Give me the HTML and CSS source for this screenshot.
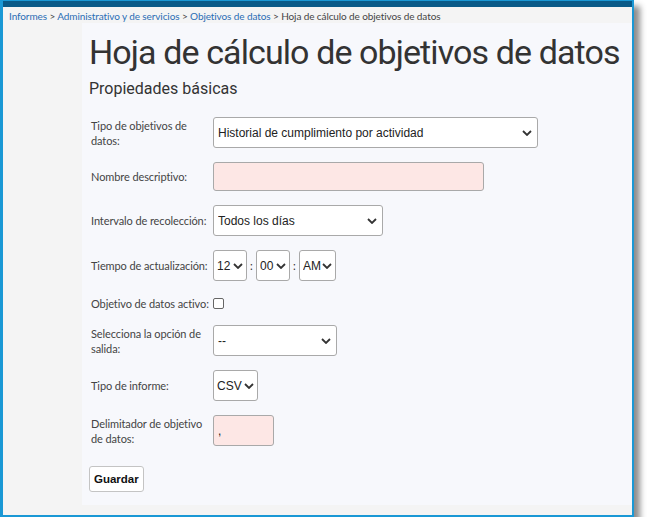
FILE: index.html
```html
<!DOCTYPE html>
<html lang="es">

<head>
    <meta charset="UTF-8" />
    <meta name="viewport" content="width=device-width, initial-scale=1.0" />
    <title>Hoja de cálculo de objetivos de datos</title>
    <link rel="stylesheet" href="styles.css">
</head>

<body>
    <div class="window">
        <div class="topbar"></div>
        <nav class="crumbs">
            <a href="#">Informes</a> &gt;
            <a href="#">Administrativo y de servicios</a> &gt;
            <a href="#">Objetivos de datos</a> &gt;
            <span>Hoja de cálculo de objetivos de datos</span>
        </nav>
        <div class="page">
            <h1>Hoja de cálculo de objetivos de datos</h1>
            <h2>Propiedades básicas</h2>
            <form class="props">
                <div class="row">
                    <label for="tipo">Tipo de objetivos de datos:</label>
                    <select id="tipo" class="w-tipo">
                        <option>Historial de cumplimiento por actividad</option>
                    </select>
                </div>
                <div class="row">
                    <label for="nombre">Nombre descriptivo:</label>
                    <input type="text" id="nombre" class="required w-nombre" />
                </div>
                <div class="row">
                    <label for="intervalo">Intervalo de recolección:</label>
                    <select id="intervalo" class="w-intervalo">
                        <option>Todos los días</option>
                    </select>
                </div>
                <div class="row">
                    <label for="hora">Tiempo de actualización:</label>
                    <div class="time">
                        <select id="hora" class="small w-hora"><option>12</option></select>
                        <span>:</span>
                        <select class="small w-min"><option>00</option></select>
                        <span>:</span>
                        <select class="small w-ampm"><option>AM</option></select>
                    </div>
                </div>
                <div class="row row-check">
                    <label for="activo">Objetivo de datos activo:</label>
                    <input type="checkbox" id="activo" />
                </div>
                <div class="row">
                    <label for="salida">Selecciona la opción de salida:</label>
                    <select id="salida" class="w-salida">
                        <option>--</option>
                    </select>
                </div>
                <div class="row">
                    <label for="informe">Tipo de informe:</label>
                    <select id="informe" class="small w-informe"><option>CSV</option></select>
                </div>
                <div class="row">
                    <label for="delim">Delimitador de objetivo de datos:</label>
                    <input type="text" id="delim" class="required w-delim" value="," />
                </div>
                <button type="button" class="save">Guardar</button>
            </form>
        </div>
    </div>
</body>

</html>
```

FILE: styles.css
```css
* {
    margin: 0;
    padding: 0;
    box-sizing: border-box;
}

body {
    background-color: #ffffff;
    font-family: Lato, sans-serif;
    color: #333;
}

.window {
    width: 634px;
    height: 517px;
    border: 2px solid #1a98d5;
    border-left-width: 3px;
    border-top-width: 1px;
    background-color: #f4f4f4;
    box-shadow: 6px 6px 6px rgba(0, 0, 0, 0.45);
    display: flex;
    flex-direction: column;
    overflow: hidden;
}

.topbar {
    height: 6px;
    background-color: #0a5a88;
}

.crumbs {
    height: 16px;
    padding: 3px 0 0 6px;
    font-size: 10px;
    line-height: 13px;
    letter-spacing: -0.1px;
    color: #444;
    white-space: nowrap;
}

.crumbs a {
    color: #2a6db5;
    text-decoration: none;
}

.page {
    flex: 1;
    margin: 0 0 10px 79px;
    padding: 8px 7px 0;
    background-color: #f7f8fc;
}

h1 {
    font-family: Roboto, sans-serif;
    font-weight: 400;
    font-size: 34px;
    line-height: 42px;
    letter-spacing: -0.9px;
    color: #333;
    white-space: nowrap;
}

h2 {
    font-family: Roboto, sans-serif;
    font-weight: 400;
    font-size: 16px;
    line-height: 20px;
    margin-top: 6px;
    color: #333;
}

.props {
    margin-top: 18px;
    display: flex;
    flex-direction: column;
    align-items: flex-start;
    gap: 14px;
}

.row {
    display: flex;
    align-items: center;
}

.row label {
    width: 124px;
    padding: 0 4px 0 2px;
    font-size: 11px;
    line-height: 15px;
    letter-spacing: -0.1px;
    color: #444;
}

.row-check {
    height: 16px;
}

select,
input[type="text"] {
    height: 31px;
    border: 1px solid #a9a9a9;
    border-radius: 3px;
    background-color: #fff;
    font-family: "Liberation Sans", Arial, sans-serif;
    font-size: 12px;
    color: #222;
}

select {
    appearance: none;
    padding: 0 24px 0 4px;
    background-image: url("data:image/svg+xml,%3Csvg xmlns='http://www.w3.org/2000/svg' width='10' height='6' viewBox='0 0 10 6'%3E%3Cpath d='M1 1l4 4 4-4' fill='none' stroke='%23333' stroke-width='1.8'/%3E%3C/svg%3E");
    background-repeat: no-repeat;
    background-position: right 5px center;
}

select.small {
    padding: 0 14px 0 3px;
    background-position: right 3px center;
}

input[type="text"] {
    padding: 0 4px;
}

input.required {
    background-color: #fde7e5;
}

input[type="checkbox"] {
    width: 11px;
    height: 11px;
    margin: 0;
    appearance: none;
    border: 1px solid #666;
    border-radius: 2px;
    background: #fff;
}

.w-tipo { width: 325px; }
input.w-nombre { width: 271px; height: 29px; }
.w-intervalo { width: 170px; }
.w-salida { width: 124px; }
.w-hora { width: 34px; }
.w-min { width: 34px; }
.w-ampm { width: 37px; }
.w-informe { width: 45px; }
.w-delim { width: 61px; }

.time {
    display: flex;
    align-items: center;
}

.time span {
    width: 9px;
    text-align: center;
    font-size: 11px;
}

.save {
    margin-top: 6px;
    height: 26px;
    padding: 0 4px;
    border: 1px solid #c4c4c4;
    border-radius: 3px;
    background-color: #fff;
    font-family: "Liberation Sans", Arial, sans-serif;
    font-size: 11.5px;
    font-weight: 700;
    color: #111;
}
```
